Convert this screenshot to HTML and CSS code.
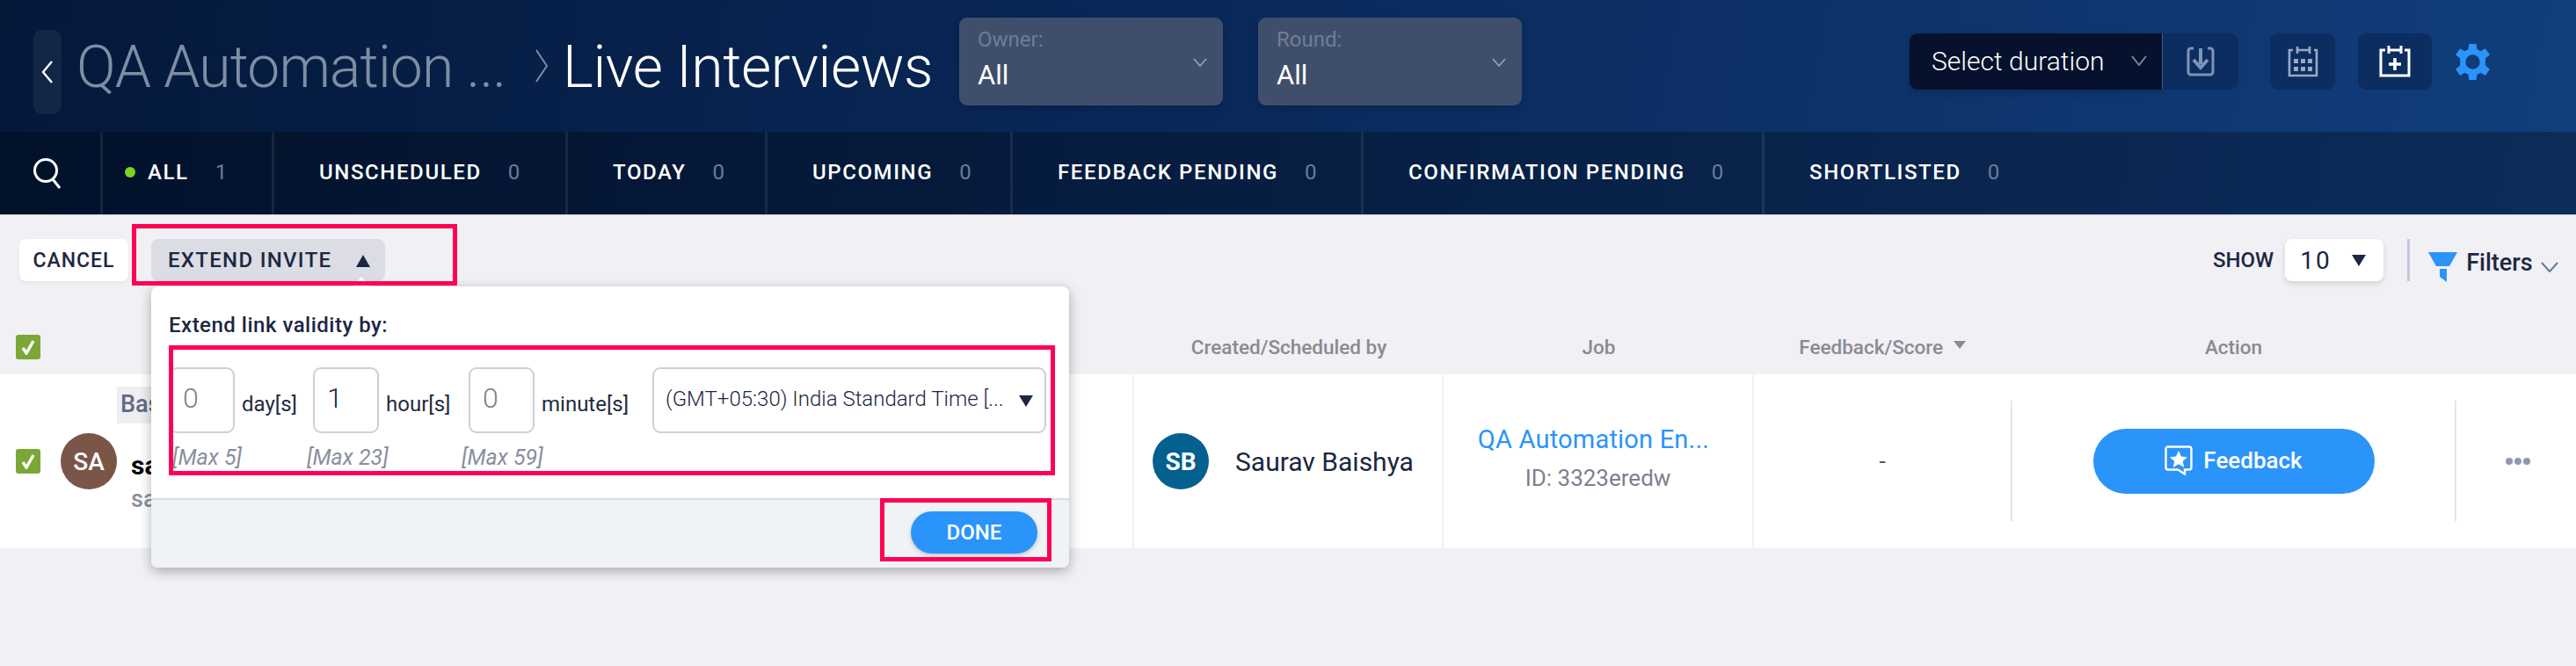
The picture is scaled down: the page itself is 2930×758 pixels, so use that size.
FILE: index.html
```html
<!DOCTYPE html>
<html lang="en">
<head>
    <meta charset="UTF-8">
    <title>Live Interviews</title>
    <link rel="stylesheet" href="styles.css">
</head>
<body>
    <div class="top">
        <header class="topbar">
            <button class="back">
                <svg width="14" height="28" viewBox="0 0 14 28"><path d="M12 2 2 14l10 12" fill="none" stroke="#fff" stroke-width="2.4"/></svg>
            </button>
            <span class="crumb">QA Automation ...</span>
            <svg class="crumb-sep" width="16" height="40" viewBox="0 0 16 40"><path d="M2 2l12 18L2 38" fill="none" stroke="#7f8da3" stroke-width="2"/></svg>
            <h1>Live Interviews</h1>

            <div class="pick pick-owner">
                <span class="pick-label">Owner:</span>
                <span class="pick-value">All</span>
                <svg class="pick-arrow" width="16" height="10" viewBox="0 0 16 10"><path d="M1 1l7 8 7-8" fill="none" stroke="#9aa5b8" stroke-width="1.6"/></svg>
            </div>
            <div class="pick pick-round">
                <span class="pick-label">Round:</span>
                <span class="pick-value">All</span>
                <svg class="pick-arrow" width="16" height="10" viewBox="0 0 16 10"><path d="M1 1l7 8 7-8" fill="none" stroke="#9aa5b8" stroke-width="1.6"/></svg>
            </div>

            <div class="tools">
                <div class="duration">
                    <span>Select duration</span>
                    <svg width="18" height="12" viewBox="0 0 18 12"><path d="M1 1l8 10 8-10" fill="none" stroke="#7f8da3" stroke-width="1.8"/></svg>
                </div>
                <button class="tool tool-download">
                    <svg width="32" height="34" viewBox="0 0 32 34" fill="none" stroke="#7d93b8" stroke-width="3">
                        <path d="M8 2H5a3 3 0 0 0-3 3v24a3 3 0 0 0 3 3h22a3 3 0 0 0 3-3V5a3 3 0 0 0-3-3h-3"/>
                        <path d="M16 2v18" stroke-width="4"/>
                        <path d="M8 15l8 9 8-9" stroke-width="4"/>
                    </svg>
                </button>
                <button class="tool tool-calendar">
                    <svg width="36" height="36" viewBox="0 0 36 36" fill="none" stroke="#9aa9c2" stroke-width="2.6">
                        <path d="M7 5H3v29h31V5h-3M12 5h14"/>
                        <path d="M12 1v8M26 1v8"/>
                        <g fill="#9aa9c2" stroke="none">
                            <rect x="8" y="15" width="5" height="5"/><rect x="16" y="15" width="5" height="5"/><rect x="24" y="15" width="5" height="5"/>
                            <rect x="8" y="24" width="5" height="5"/><rect x="16" y="24" width="5" height="5"/><rect x="24" y="24" width="5" height="5"/>
                        </g>
                    </svg>
                </button>
                <button class="tool tool-add">
                    <svg width="36" height="36" viewBox="0 0 36 36" fill="none" stroke="#fff" stroke-width="3">
                        <path d="M7 5H2v29h32V5h-5M12 5h12"/>
                        <path d="M11 0v9M25 0v9"/>
                        <path d="M18 14v14M11 21h14" stroke-width="3.6"/>
                    </svg>
                </button>
                <svg class="gear" width="41" height="41" viewBox="0 0 40 40">
                    <path fill="#2a94fa" fill-rule="evenodd" d="M16 0h8l1 6 4 2 5-3 5 7-5 4v8l5 4-5 7-5-3-4 2-1 6h-8l-1-6-4-2-5 3-5-7 5-4v-8l-5-4 5-7 5 3 4-2zM20 12a8 8 0 1 0 0 16 8 8 0 0 0 0-16z"/>
                </svg>
            </div>
        </header>

        <nav class="tabs">
            <div class="tab tab-search">
                <svg width="34" height="36" viewBox="0 0 34 36" fill="none" stroke="#fff" stroke-width="3"><circle cx="15" cy="15" r="12.5"/><path d="M23 25l8 10"/></svg>
            </div>
            <div class="tab tab-all"><i class="dot"></i><b>ALL</b><em>1</em></div>
            <div class="tab"><b>UNSCHEDULED</b><em>0</em></div>
            <div class="tab"><b>TODAY</b><em>0</em></div>
            <div class="tab"><b>UPCOMING</b><em>0</em></div>
            <div class="tab"><b>FEEDBACK PENDING</b><em>0</em></div>
            <div class="tab"><b>CONFIRMATION PENDING</b><em>0</em></div>
            <div class="tab tab-last"><b>SHORTLISTED</b><em>0</em></div>
        </nav>
    </div>

    <div class="actions">
        <button class="btn">CANCEL</button>
        <button class="btn btn-open">EXTEND INVITE <i class="caret-up"></i></button>
        <div class="show">
            <span>SHOW</span>
            <div class="show-box">10 <i class="caret-down"></i></div>
        </div>
        <div class="filters">
            <svg width="34" height="34" viewBox="0 0 34 34"><path fill="#2a94fa" d="M0 0h33l-9 16H9zM13 19h8v15l-8-6z"/></svg>
            <span>Filters</span>
            <svg width="20" height="12" viewBox="0 0 20 12"><path d="M1 1l9 10 9-10" fill="none" stroke="#68779c" stroke-width="2"/></svg>
        </div>
    </div>

    <div class="thead">
        <div class="th th-first"><span class="check"><svg width="16" height="18" viewBox="0 0 16 18"><path d="M2 10l4 6 8-14" fill="none" stroke="#fff" stroke-width="3.4"/></svg></span></div>
        <div class="th">Created/Scheduled by</div>
        <div class="th">Job</div>
        <div class="th">Feedback/Score <i class="caret-sort"></i></div>
        <div class="th">Action</div>
        <div class="th"></div>
    </div>

    <div class="row">
        <div class="cell cell-candidate">
            <span class="check"><svg width="16" height="18" viewBox="0 0 16 18"><path d="M2 10l4 6 8-14" fill="none" stroke="#fff" stroke-width="3.4"/></svg></span>
            <span class="avatar avatar-sa">SA</span>
            <div class="cand-info">
                <span class="tag">Bas</span>
                <span class="cand-name">sa</span>
                <span class="cand-mail">sa</span>
            </div>
        </div>
        <div class="cell cell-owner">
            <span class="avatar avatar-sb">SB</span>
            <span class="owner-name">Saurav Baishya</span>
        </div>
        <div class="cell cell-job">
            <a class="job-link">QA Automation En...</a>
            <span class="job-id">ID: 3323eredw</span>
        </div>
        <div class="cell cell-score">-</div>
        <div class="cell cell-action">
            <button class="feedback">
                <svg width="32" height="34" viewBox="0 0 32 34"><path d="M4 1.500h24a2.500 2.500 0 0 1 2.500 2.500v21a2.500 2.500 0 0 1-2.500 2.500h-5v5l-8-5H4A2.500 2.500 0 0 1 1.500 25V4A2.500 2.500 0 0 1 4 1.500z" fill="none" stroke="#fff" stroke-width="2.4"/><path fill="#fff" d="M16 6l3 6.500 7 .7-5.200 4.700 1.500 7L16 21.300 9.700 24.900l1.500-7L6 13.200l7-.7z"/></svg>
                <span>Feedback</span>
            </button>
        </div>
        <div class="cell cell-more"><i></i><i></i><i></i></div>
    </div>

    <!-- popover opened from extend invite -->
    <div class="popover">
        <div class="pop-body">
            <p class="pop-title">Extend link validity by:</p>
            <div class="pop-fields">
                <div class="field field-day">
                    <div class="field-row"><span class="num">0</span><span class="unit">day[s]</span></div>
                    <span class="hint">[Max 5]</span>
                </div>
                <div class="field field-hour">
                    <div class="field-row"><span class="num num-set">1</span><span class="unit">hour[s]</span></div>
                    <span class="hint">[Max 23]</span>
                </div>
                <div class="field field-minute">
                    <div class="field-row"><span class="num">0</span><span class="unit">minute[s]</span></div>
                    <span class="hint">[Max 59]</span>
                </div>
                <div class="zone"><span>(GMT+05:30) India Standard Time [...</span><i class="caret-down"></i></div>
            </div>
        </div>
        <div class="pop-foot">
            <button class="done">DONE</button>
        </div>
    </div>

    <!-- red annotation boxes -->
    <div class="mark mark-extend"></div>
    <div class="mark mark-fields"></div>
    <div class="mark mark-done"></div>
</body>
</html>
```

FILE: styles.css
```css
* {
    box-sizing: border-box;
}

html, body {
    height: 100%;
}

body {
    margin: 0;
    position: relative;
    overflow: hidden;
    background-color: #f0f0f5;
    color: #1c2742;
    font-family: Roboto, "Liberation Sans", sans-serif;
}

button {
    font-family: inherit;
    border: none;
    padding: 0;
}

i, em {
    font-style: normal;
}

.top {
    background: linear-gradient(100deg, #04183a 0%, #0a2a5c 50%, #113e7d 100%);
    border-bottom: 1px solid #d5d6dd;
}

/* top bar */
.topbar {
    display: flex;
    align-items: center;
    height: 150px;
    padding-left: 38px;
}

.back {
    display: flex;
    align-items: center;
    justify-content: center;
    width: 32px;
    height: 96px;
    border-radius: 10px;
    background-color: rgba(255, 255, 255, 0.06);
    margin-top: 14px;
}

.crumb {
    margin: 2px 0 0 17px;
    font-size: 66px;
    font-weight: 300;
    color: #7f8da3;
    letter-spacing: -0.9px;
    width: 521px;
    white-space: nowrap;
}

.crumb-sep {
    flex: none;
}

h1 {
    margin: 2px 0 0 16px;
    width: 451px;
    font-size: 66px;
    font-weight: 300;
    color: #fff;
    letter-spacing: -0.4px;
    white-space: nowrap;
}

.pick {
    position: relative;
    display: flex;
    flex-direction: column;
    width: 300px;
    height: 100px;
    margin-top: -10px;
    padding: 11px 21px;
    border-radius: 9px;
    background-color: #3f4f6b;
    box-shadow: 0 3px 8px rgba(0, 0, 0, 0.15);
}

.pick-round {
    margin-left: 40px;
}

.pick-label {
    font-size: 24px;
    color: #6f7d96;
}

.pick-value {
    margin-top: 8px;
    font-size: 31px;
    color: #fff;
}

.pick-arrow {
    position: absolute;
    right: 18px;
    top: 46px;
}

.tools {
    display: flex;
    align-items: center;
    margin-left: 441px;
    margin-top: -10px;
}

.duration {
    display: flex;
    align-items: center;
    justify-content: space-between;
    width: 288px;
    height: 64px;
    padding: 0 17px 2px 25px;
    border-radius: 9px 0 0 9px;
    background-color: #05112d;
    border-right: 1px solid #44587a;
    box-shadow: 0 3px 8px rgba(0, 0, 0, 0.2);
    color: #fff;
    font-size: 30px;
    font-weight: 300;
}

.tool {
    display: flex;
    align-items: center;
    justify-content: center;
    height: 64px;
    border-radius: 9px;
    background-color: #0c2d60;
}

.tool-download {
    width: 86px;
    border-radius: 0 9px 9px 0;
}

.tool-calendar {
    width: 74px;
    margin-left: 36px;
}

.tool-add {
    width: 84px;
    margin-left: 26px;
}

.gear {
    margin-left: 26px;
}

/* tabs */
.tabs {
    display: grid;
    grid-template-columns: 117px 195px 334px 227px 279px 399px 456px 1fr;
    height: 94px;
    background-color: rgba(0, 0, 0, 0.28);
}

.tab {
    display: flex;
    align-items: center;
    padding: 0 0 3px 51px;
    border-right: 3px solid rgba(255, 255, 255, 0.08);
    white-space: nowrap;
}

.tab-search {
    padding: 0 0 0 37px;
}

.tab-all {
    padding: 0 0 3px 25px;
}

.tab-last {
    border-right: none;
}

.tab b {
    font-size: 24px;
    font-weight: 500;
    letter-spacing: 1.6px;
    color: #fff;
}

.tab em {
    margin-left: 30px;
    font-size: 24px;
    color: #6b7c99;
}

.dot {
    width: 12px;
    height: 12px;
    margin-right: 14px;
    border-radius: 50%;
    background-color: #7ed321;
}

/* action row */
.actions {
    display: flex;
    align-items: flex-start;
    height: 112px;
    padding: 27px 0 0 22px;
}

.btn {
    width: 124px;
    height: 48px;
    border-radius: 8px;
    background-color: #fff;
    color: #1c2742;
    font-size: 23px;
    font-weight: 500;
    letter-spacing: 1px;
    box-shadow: 0 2px 4px rgba(0, 0, 0, 0.05);
}

.btn-open {
    width: 266px;
    margin-left: 26px;
    padding-left: 19px;
    text-align: left;
    background-color: #dcdde4;
    font-size: 24px;
    letter-spacing: 1.3px;
    box-shadow: none;
}

.caret-up {
    display: inline-block;
    margin-left: 20px;
    border-left: 8px solid transparent;
    border-right: 8px solid transparent;
    border-bottom: 14px solid #1c2742;
}

.caret-down {
    display: inline-block;
    flex: none;
    border-left: 8px solid transparent;
    border-right: 8px solid transparent;
    border-top: 13px solid #1c2742;
}

.show {
    display: flex;
    align-items: center;
    margin-left: 2079px;
    font-size: 24px;
    font-weight: 500;
}

.show-box {
    display: flex;
    align-items: center;
    justify-content: space-between;
    width: 112px;
    height: 48px;
    margin-left: 13px;
    padding: 0 20px 0 17px;
    border-radius: 8px;
    background-color: #fff;
    font-size: 28px;
    font-weight: 400;
    letter-spacing: 2px;
    box-shadow: 0 3px 6px rgba(0, 0, 0, 0.12);
}

.filters {
    display: flex;
    align-items: center;
    margin-left: 27px;
    padding-left: 21px;
    height: 48px;
    border-left: 3px solid #c0c8dc;
    font-size: 27px;
    font-weight: 500;
}

.filters svg {
    flex: none;
    margin-top: 16px;
}

.filters span {
    margin: 6px 9px 0 9px;
}

/* table */
.thead, .row {
    display: grid;
    grid-template-columns: 1290px 352px 353px 292px 507px 136px;
}

.thead {
    height: 69px;
    padding-top: 7px;
    align-items: center;
}

.th {
    text-align: center;
    font-size: 22.500px;
    font-weight: 500;
    color: #8a8a92;
    white-space: nowrap;
}

.th-first {
    display: flex;
    padding-left: 18px;
}

.caret-sort {
    display: inline-block;
    margin-left: 6px;
    vertical-align: 6px;
    border-left: 7px solid transparent;
    border-right: 7px solid transparent;
    border-top: 9px solid #8a8a92;
}

.check {
    display: flex;
    align-items: center;
    justify-content: center;
    width: 28px;
    height: 28px;
    border-radius: 3px;
    background-color: #7ba736;
}

.row {
    height: 198px;
    background-color: #fff;
}

.cell {
    display: flex;
    align-items: center;
    border-right: 2px solid #f3f3f6;
}

.cell-candidate {
    padding-left: 18px;
}

.avatar {
    display: flex;
    flex: none;
    align-items: center;
    justify-content: center;
    width: 64px;
    height: 64px;
    border-radius: 50%;
    color: #fff;
    font-size: 28px;
    font-weight: 500;
}

.avatar-sa {
    margin-left: 23px;
    background-color: #7a5548;
}

.avatar-sb {
    margin-left: 21px;
    background-color: #03608f;
    font-weight: 700;
}

.cand-info {
    display: flex;
    flex-direction: column;
    align-self: flex-start;
    align-items: flex-start;
    margin-left: 16px;
    padding-top: 14px;
}

.tag {
    margin-left: -16px;
    padding: 4px 60px 4px 4px;
    height: 42px;
    background-color: #eeeef3;
    color: #5f6b85;
    font-size: 27px;
    font-weight: 500;
}

.cand-name {
    margin-top: 30px;
    color: #000;
    font-size: 30px;
    font-weight: 700;
}

.cand-mail {
    margin-top: 5px;
    color: #8a8f9e;
    font-size: 27px;
    font-weight: 500;
}

.owner-name {
    margin-left: 30px;
    font-size: 30px;
    color: #1c2742;
    white-space: nowrap;
}

.cell-job {
    flex-direction: column;
    justify-content: center;
    padding-bottom: 8px;
}

.job-link {
    margin-right: 10px;
    color: #2a94fa;
    font-size: 29px;
    letter-spacing: 0.2px;
    white-space: nowrap;
}

.job-id {
    margin-top: 12px;
    color: #7c8090;
    font-size: 26px;
}

.cell-score {
    justify-content: center;
    border-right: none;
    font-size: 26px;
    color: #555;
}

.cell-action {
    position: relative;
    justify-content: center;
    border-right: none;
}

/* short rules either side of the button */
.cell-action::before, .cell-action::after {
    content: "";
    position: absolute;
    top: 30px;
    bottom: 31px;
    width: 2px;
    background-color: #e4e4e8;
}

.cell-action::before {
    left: 0;
}

.cell-action::after {
    right: 0;
}

.feedback {
    display: flex;
    align-items: center;
    justify-content: center;
    gap: 12px;
    width: 320px;
    height: 74px;
    padding-bottom: 2px;
    border-radius: 37px;
    background-color: #2a94fa;
    color: #fff;
    font-size: 26px;
    font-weight: 500;
}

.cell-more {
    justify-content: flex-start;
    gap: 2px;
    padding-left: 56px;
    border-right: none;
}

.cell-more i {
    width: 8px;
    height: 8px;
    border-radius: 50%;
    background-color: #8f97b5;
}

/* popover */
.popover {
    position: absolute;
    left: 172px;
    top: 326px;
    width: 1044px;
    height: 320px;
    display: flex;
    flex-direction: column;
    border-radius: 8px;
    background-color: #fff;
    box-shadow: 0 4px 14px rgba(0, 0, 0, 0.3);
}

.popover::before {
    content: "";
    position: absolute;
    left: 229px;
    top: -11px;
    border-left: 10px solid transparent;
    border-right: 10px solid transparent;
    border-bottom: 11px solid #fff;
}

.pop-body {
    flex: 1;
    padding: 30px 0 0 20px;
}

.pop-title {
    margin: 0;
    font-size: 24px;
    font-weight: 500;
    letter-spacing: 0.5px;
    color: #1c2742;
}

.pop-fields {
    display: flex;
    margin-top: 34px;
}

.field {
    display: flex;
    flex-direction: column;
    flex: none;
}

.field-day {
    width: 164px;
}

.field-hour {
    width: 177px;
}

.field-minute {
    width: 209px;
}

.field-row {
    display: flex;
    align-items: center;
}

.num {
    width: 75px;
    height: 75px;
    padding: 14px 0 0 14px;
    border: 2px solid #ccd0d9;
    border-radius: 9px;
    font-size: 32px;
    font-weight: 300;
    color: #7c8090;
}

.num-set {
    color: #1c2742;
}

.unit {
    margin: 8px 0 0 8px;
    font-size: 24px;
    color: #222b40;
}

.hint {
    margin-top: 13px;
    font-size: 25px;
    font-style: italic;
    color: #8a8f9e;
    white-space: nowrap;
}

.field-day .hint {
    margin-left: 4px;
}

.field-hour .hint {
    margin-left: -7px;
}

.field-minute .hint {
    margin-left: -8px;
}

.zone {
    display: flex;
    justify-content: space-between;
    width: 448px;
    height: 75px;
    padding: 20px 13px 0 13px;
    border: 2px solid #ccd0d9;
    border-radius: 9px;
    font-size: 24px;
    font-weight: 300;
    color: #1c2742;
    white-space: nowrap;
}

.zone .caret-down {
    margin-top: 10px;
}

.pop-foot {
    display: flex;
    justify-content: flex-end;
    align-items: flex-start;
    height: 79px;
    padding: 13px 36px 0 0;
    border-top: 2px solid #d5dfe6;
    border-radius: 0 0 8px 8px;
    background-color: #eff3f6;
}

.done {
    width: 144px;
    height: 48px;
    border-radius: 24px;
    background-color: #2a94fa;
    color: #fff;
    font-size: 24px;
    font-weight: 500;
    box-shadow: 0 2px 5px rgba(0, 0, 0, 0.2);
}

.mark {
    position: absolute;
    border: 5px solid #ff0054;
}

.mark-extend {
    left: 150px;
    top: 255px;
    width: 370px;
    height: 70px;
}

.mark-fields {
    left: 192px;
    top: 393px;
    width: 1008px;
    height: 148px;
}

.mark-done {
    left: 1001px;
    top: 567px;
    width: 195px;
    height: 72px;
}
```
